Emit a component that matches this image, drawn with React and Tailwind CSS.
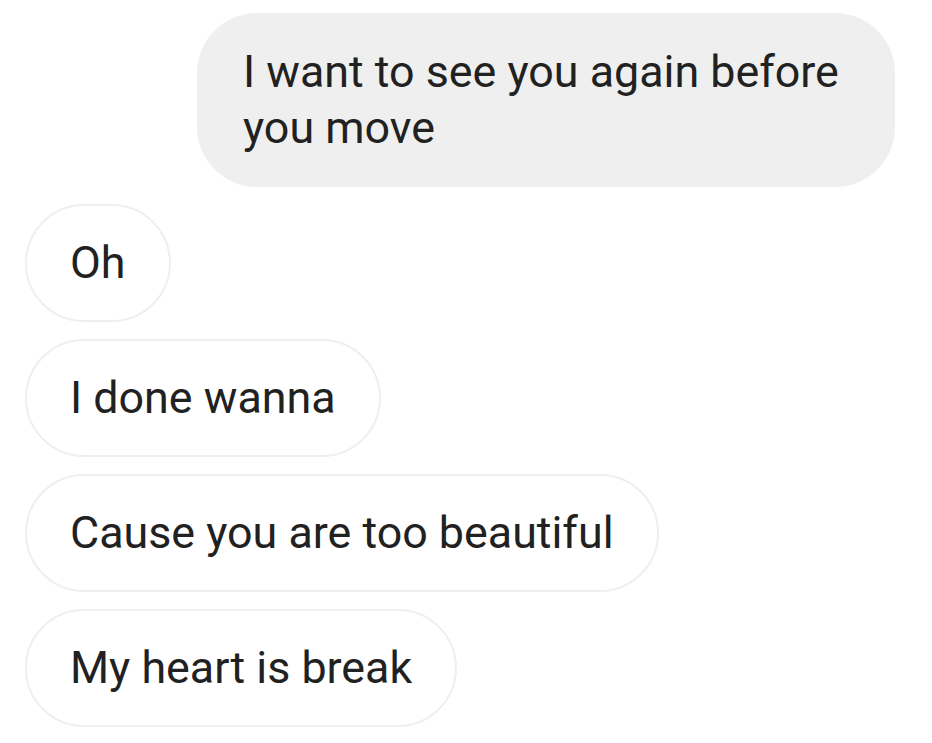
import React from "react";

const received = ["Oh", "I done wanna", "Cause you are too beautiful", "My heart is break"];

export default function App() {
  return (
    <div
      className="w-[932px] h-[743px] bg-white overflow-hidden text-[#212121]"
      style={{ fontFamily: "Roboto, 'Noto Sans', sans-serif" }}
    >
      <div className="flex flex-col pt-[13px]">
        <div className="flex justify-end pr-[37px]">
          <div className="w-[698px] bg-[#efefef] rounded-[60px] pl-[46px] pr-[40px] py-[31px] text-[44.8px] leading-[56px]">
            I want to see you again before you move
          </div>
        </div>
        <div className="flex flex-col items-start gap-[17px] pl-[25px] mt-[17px]">
          {received.map((msg) => (
            <div
              key={msg}
              className="border-2 border-[#efefef] rounded-[60px] px-[43px] py-[29px] text-[44.8px] leading-[56px] whitespace-nowrap"
            >
              {msg}
            </div>
          ))}
        </div>
      </div>
    </div>
  );
}
